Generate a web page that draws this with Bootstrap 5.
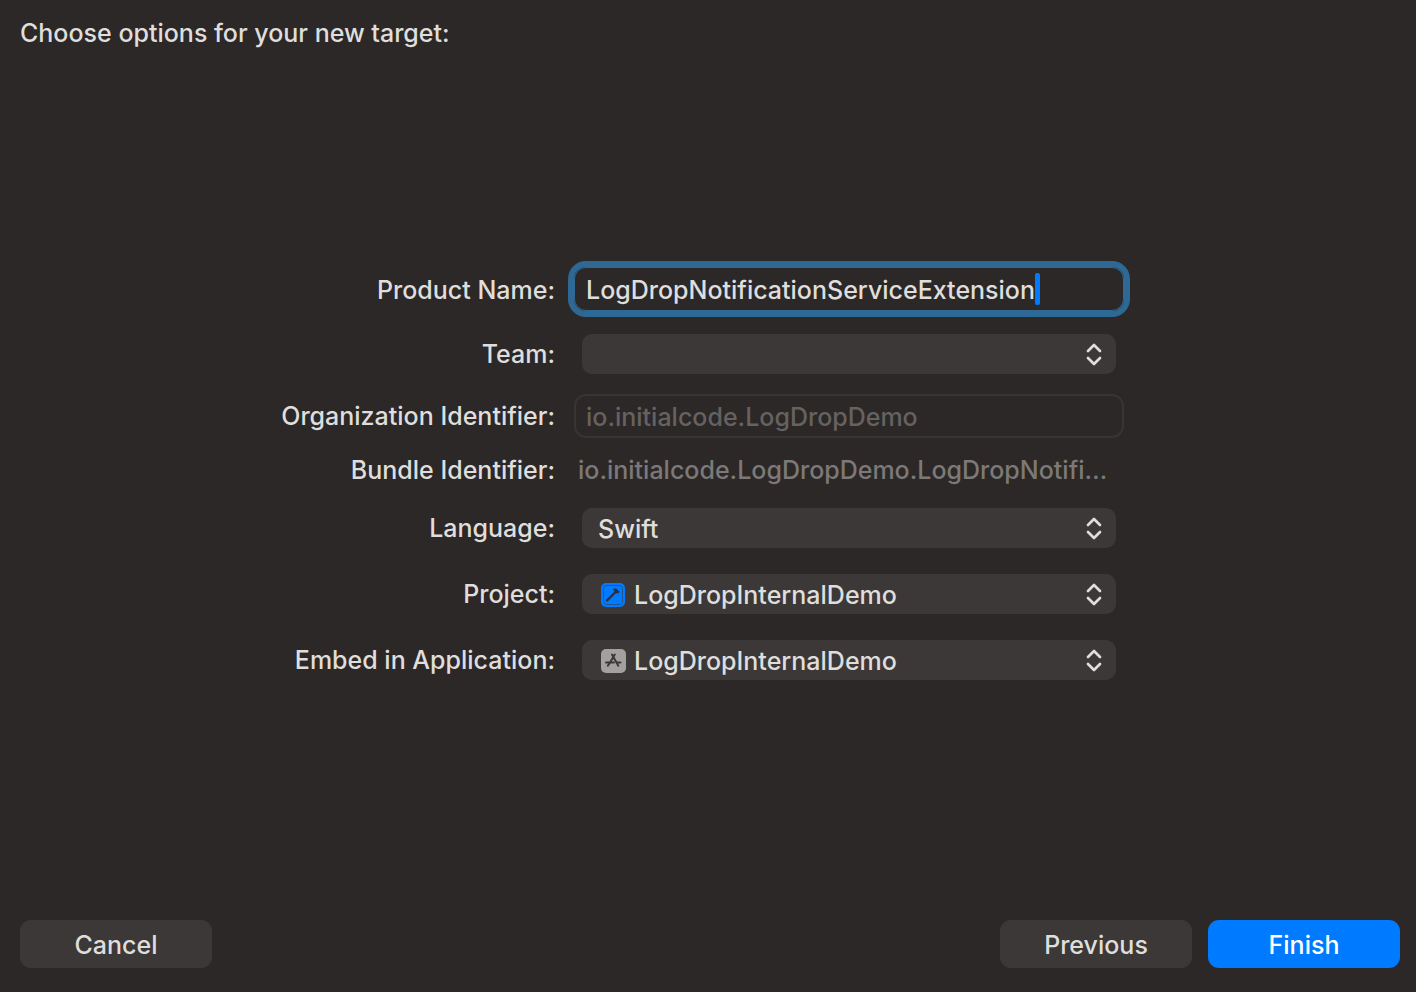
<!DOCTYPE html>
<html lang="en" data-bs-theme="dark">
<head>
<meta charset="utf-8">
<meta name="viewport" content="width=device-width, initial-scale=1">
<title>New Target Options</title>
<link href="https://cdn.jsdelivr.net/npm/bootstrap@5.3.0/dist/css/bootstrap.min.css" rel="stylesheet">
<style>
  :root { --sheet: #2c2827; --control: #3c3837; --ink: #dfdedd; --accent: #007aff; --ring: #2e6996; }
  body { background: var(--sheet); color: var(--ink); font-family: Inter, "Liberation Sans", sans-serif; font-size: 25px; line-height: 30px; font-weight: 500; }
  .sheet-head { padding: 18px 20px 0; }
  .sheet-title { font-size: 25px; line-height: 30px; font-weight: 500; color: var(--ink); }
  .sheet-main { padding: 0 30px 16px 16px; }
  .options { width: 100%; max-width: 846px; display: grid; grid-template-columns: minmax(0, 1fr) minmax(0, 550px); column-gap: 19px; row-gap: 14px; align-items: center; }
  .options > label, .options > .caption-cell { text-align: right; white-space: nowrap; justify-self: end; }
  .field-box { height: 44px; padding: 2px 11px 0; border: 1px solid #383433; border-radius: 12px; background: transparent; color: var(--ink); font-size: 25px; line-height: 30px; font-weight: 500; }
  .field-box:disabled { background: transparent; color: #656261; opacity: 1; border-width: 2px; padding: 2px 10px 0; }
  .field-active, .field-active:focus { background: transparent; color: var(--ink); border-color: var(--ring); box-shadow: 0 0 0 6px var(--ring); caret-color: transparent; }
  .field-wrap { margin-bottom: 3px; }
  .caret { left: 461px; top: 6px; width: 5px; height: 32px; border-radius: 2px; background: var(--accent); }
  .bundle-value { color: #7c7978; padding: 0 4px; line-height: 36px; }
  .popup { margin: 6px 8px; }
  .popup select { height: 40px; padding: 2px 44px 0 16px; border: 0; border-radius: 10px; background: var(--control); color: var(--ink); font-size: 25px; line-height: 30px; font-weight: 500; }
  .popup.has-icon select { padding-left: 52px; }
  .popup svg { top: 0; pointer-events: none; }
  .popup .chevrons { right: 12px; }
  .popup .item-icon { left: 18px; top: 8px; }
  .sheet-foot { padding: 0 16px 24px 20px; }
  .sheet-btn { --bs-btn-bg: var(--control); --bs-btn-color: var(--ink); --bs-btn-hover-bg: #4a4645; --bs-btn-hover-color: #fff; width: 192px; height: 48px; padding: 2px 0 0; border: 0; border-radius: 11px; font-size: 25px; line-height: 30px; font-weight: 500; }
  .sheet-btn-main { --bs-btn-bg: var(--accent); --bs-btn-color: #fff; --bs-btn-hover-bg: #1a88ff; }
</style>
</head>
<body>
<svg class="d-none" aria-hidden="true">
  <symbol id="updown" viewBox="0 0 20 40">
    <path d="M4 17 10 11 16 17M4 24 10 30 16 24" fill="none" stroke="#dfdedd" stroke-width="2.7" stroke-linecap="round" stroke-linejoin="round"/>
  </symbol>
</svg>
<div class="d-flex flex-column min-vh-100">
  <header class="sheet-head">
    <h1 class="sheet-title m-0">Choose options for your new target:</h1>
  </header>

  <main class="sheet-main flex-grow-1 d-flex flex-column justify-content-center align-items-center">
    <form id="options" class="options">
      <label for="product">Product Name:</label>
      <div class="field-wrap position-relative">
        <input id="product" class="form-control field-box field-active" type="text" value="LogDropNotificationServiceExtension" spellcheck="false">
        <span class="caret position-absolute"></span>
      </div>

      <label for="team">Team:</label>
      <div class="popup position-relative">
        <select id="team" class="form-select"><option></option></select>
        <svg class="chevrons position-absolute" width="20" height="40"><use href="#updown"/></svg>
      </div>

      <label for="org">Organization Identifier:</label>
      <input id="org" class="form-control field-box" type="text" value="io.initialcode.LogDropDemo" disabled>

      <div class="caption-cell">Bundle Identifier:</div>
      <div class="bundle-value text-truncate">io.initialcode.LogDropDemo.LogDropNotifi…</div>

      <label for="language">Language:</label>
      <div class="popup position-relative">
        <select id="language" class="form-select"><option>Swift</option></select>
        <svg class="chevrons position-absolute" width="20" height="40"><use href="#updown"/></svg>
      </div>

      <label for="project">Project:</label>
      <div class="popup has-icon position-relative">
        <select id="project" class="form-select"><option>LogDropInternalDemo</option></select>
        <svg class="item-icon position-absolute" width="26" height="26" viewBox="0 0 26 26" aria-hidden="true">
          <rect x="1" y="1" width="24" height="24" rx="5" fill="#007aff"/>
          <rect x="3.500" y="3.500" width="19" height="19" rx="3" fill="none" stroke="#1c568f" stroke-width="1"/>
          <path d="M7 18.500 15.500 10" stroke="#2c3238" stroke-width="2.400" stroke-linecap="round"/>
          <path d="M12 7.200C14 6 16 6.200 17.500 7.500L18.500 9 19.800 9.500 18.300 11.500 17.200 11 16 11.700 14 9.500 14.300 8.200Z" fill="#2c3238"/>
        </svg>
        <svg class="chevrons position-absolute" width="20" height="40"><use href="#updown"/></svg>
      </div>

      <label for="embed">Embed in Application:</label>
      <div class="popup has-icon position-relative">
        <select id="embed" class="form-select"><option>LogDropInternalDemo</option></select>
        <svg class="item-icon position-absolute" width="26" height="26" viewBox="0 0 26 26" aria-hidden="true">
          <rect x="1" y="1" width="25" height="24" rx="5" fill="#a3a19f"/>
          <path d="M14.800 6.500 9 16.200M12 6.500 18.300 17.700M6 14.500H14M17 14.500H20.500M7.800 17.700 8.200 17" fill="none" stroke="#3c3837" stroke-width="2" stroke-linecap="round"/>
        </svg>
        <svg class="chevrons position-absolute" width="20" height="40"><use href="#updown"/></svg>
      </div>
    </form>
  </main>

  <footer class="sheet-foot d-flex flex-wrap gap-3">
    <button type="button" class="btn sheet-btn me-auto">Cancel</button>
    <button type="button" class="btn sheet-btn">Previous</button>
    <button type="submit" form="options" class="btn sheet-btn sheet-btn-main">Finish</button>
  </footer>
</div>
<script src="https://cdn.jsdelivr.net/npm/bootstrap@5.3.0/dist/js/bootstrap.bundle.min.js"></script>
</body>
</html>
